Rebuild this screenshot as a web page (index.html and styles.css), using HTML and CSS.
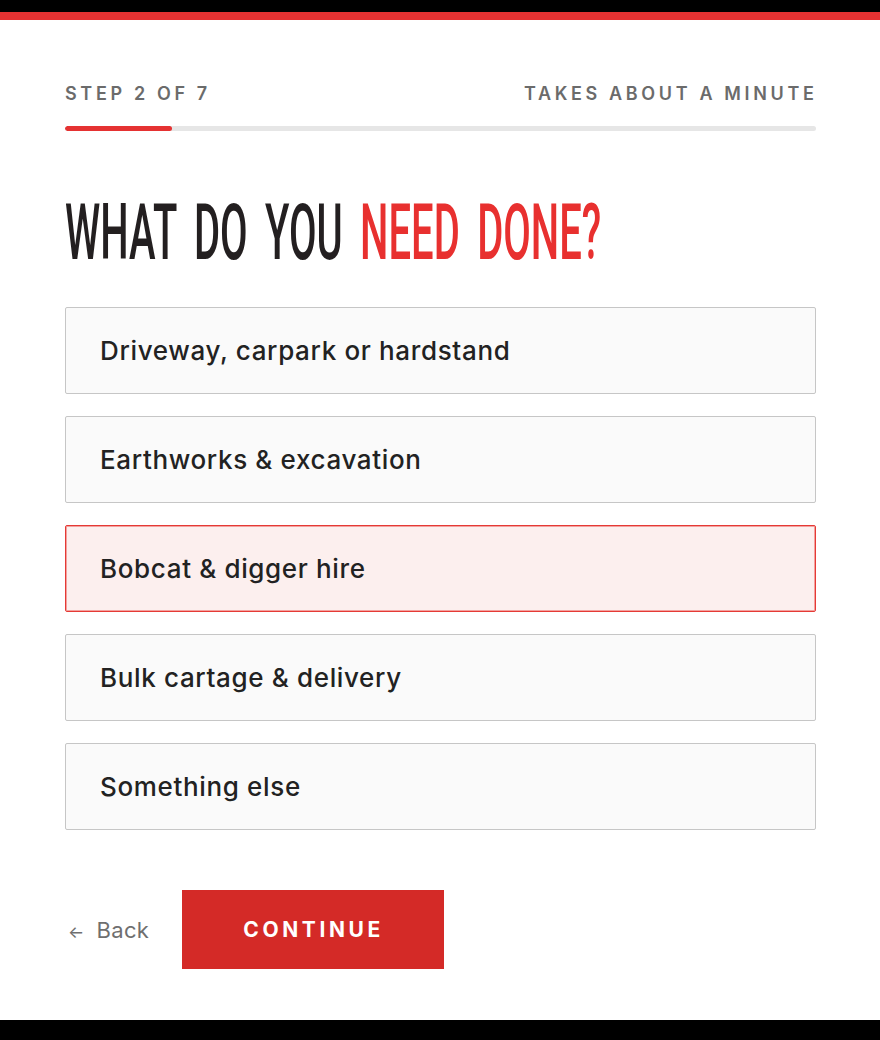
FILE: index.html
```html
<!DOCTYPE html>
<html lang="en">
<head>
<meta charset="utf-8">
<title>What do you need done?</title>
<link rel="stylesheet" href="styles.css">
</head>
<body>
<main class="card">
  <div class="meta">
    <span>STEP 2 OF 7</span>
    <span>TAKES ABOUT A MINUTE</span>
  </div>
  <div class="progress"><div class="progress-fill" style="width:14.2857%"></div></div>
  <h1 class="title"><span class="title-inner">WHAT DO YOU <em>NEED DONE?</em></span></h1>
  <div class="options">
    <div class="option">Driveway, carpark or hardstand</div>
    <div class="option">Earthworks &amp; excavation</div>
    <div class="option selected">Bobcat &amp; digger hire</div>
    <div class="option">Bulk cartage &amp; delivery</div>
    <div class="option">Something else</div>
  </div>
  <div class="actions">
    <a class="back"><span class="arrow">←</span>Back</a>
    <button class="continue">CONTINUE</button>
  </div>
</main>
</body>
</html>
```

FILE: styles.css
```css
html, body {
  margin: 0;
  padding: 0;
  background: #000;
}
body {
  padding-top: 12px;
  font-family: Inter, "Noto Sans", sans-serif;
}
.card {
  background: #fff;
  border-top: 8px solid #e53232;
  height: 1008px;
  box-sizing: border-box;
  padding: 62px 64px 0 65px;
}
.meta {
  display: flex;
  justify-content: space-between;
  font-size: 18px;
  line-height: 24px;
  font-weight: 600;
  letter-spacing: 3.65px;
  color: #6b6b6b;
}
.meta span:last-child {
  margin-right: -1.5px;
}
.progress {
  margin-top: 20px;
  height: 5px;
  border-radius: 3px;
  background: #e6e6e6;
  overflow: hidden;
}
.progress-fill {
  height: 100%;
  background: #e53232;
  border-radius: 3px;
}
.title {
  margin: 89px 0 0 0;
  height: 28px;
  line-height: 28px;
  font-family: Roboto, "Liberation Sans", sans-serif;
  font-weight: 500;
  font-size: 40px;
  color: #231f20;
  white-space: nowrap;
}
.title-inner {
  display: inline-block;
  line-height: 28px;
  word-spacing: 7.5px;
  transform: scaleY(1.93);
  transform-origin: center;
}
.title em {
  font-style: normal;
  color: #e8302f;
}
.options {
  margin-top: 59px;
  display: flex;
  flex-direction: column;
  gap: 22px;
}
.option {
  height: 87px;
  box-sizing: border-box;
  border: 1px solid #c6c6c6;
  border-radius: 2px;
  background: #fafafa;
  display: flex;
  align-items: center;
  padding-left: 34px;
  font-size: 26px;
  font-weight: 450;
  letter-spacing: 0.65px;
  color: #222;
}
.option.selected {
  border-color: #e53935;
  box-shadow: inset 0 0 0 1px #f3a19e;
  background: #fcefee;
}
.actions {
  margin-top: 60px;
  display: flex;
  align-items: center;
  gap: 33px;
}
.back {
  font-size: 22px;
  letter-spacing: 0.3px;
  color: #6f6f6f;
  padding-left: 3px;
}
.arrow {
  font-size: 17px;
  margin-right: 12px;
}
.continue {
  width: 262px;
  height: 79px;
  border: none;
  background: #d42a27;
  color: #fff;
  font-family: Inter, "Noto Sans", sans-serif;
  font-size: 21px;
  font-weight: 700;
  letter-spacing: 3.6px;
  padding: 0 0 0 1px;
}
```
